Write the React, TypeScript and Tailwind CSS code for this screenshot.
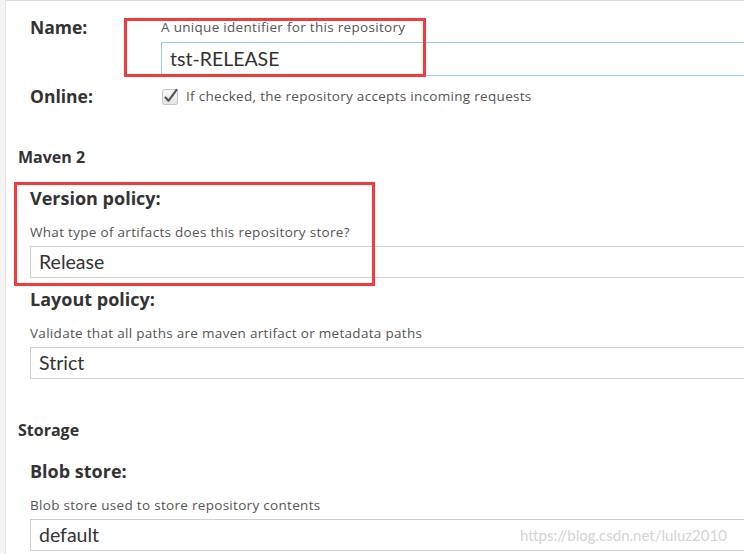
const sans = { fontFamily: "'Open Sans', 'Liberation Sans', sans-serif" };
const valueFont = { fontFamily: "Lato, 'Liberation Sans', sans-serif" };

const desc = "text-[13.5px] leading-[18px] tracking-[0.3px] text-[#555]";
const title = "text-[18px] font-bold leading-[22px] text-[#333]";
const section = "pl-[12px] text-[16px] font-bold leading-[18px] text-[#333]";

function FieldBox({ value, focused }: { value: string; focused?: boolean }) {
  return (
    <div
      className={
        "flex w-[calc(100%+12px)] items-center border pl-[8px] text-[19.5px] text-[#333] " +
        (focused ? "h-[34px] border-[#98cbee]" : "h-[32px] border-[#cfcfcf]")
      }
      style={valueFont}
    >
      {value}
    </div>
  );
}

function CheckBox() {
  return (
    <svg width="17" height="17" viewBox="0 0 17 17" className="shrink-0">
      <defs>
        <linearGradient id="cb" x1="0" y1="0" x2="0" y2="1">
          <stop offset="0" stopColor="#fbfbfb" />
          <stop offset="1" stopColor="#e2e2e2" />
        </linearGradient>
      </defs>
      <rect x="0.5" y="1.5" width="15" height="15" rx="2" fill="url(#cb)" stroke="#c4c4c4" />
      <path d="M3.5 9.5 L6.5 12.8 L14.5 1.8" fill="none" stroke="#555" strokeWidth="2.2" strokeLinecap="round" strokeLinejoin="round" />
    </svg>
  );
}

export default function App() {
  return (
    <div className="flex h-[554px] w-[744px] overflow-hidden bg-white" style={sans}>
      <div className="w-[6px] shrink-0 border-r border-[#e2e2e2] bg-[#f5f5f5]" />
      <div className="relative flex-1 border-t border-[#dcdcdc]">
        {/* Name */}
        <div className="flex pl-[24px] pt-[16px]">
          <div className="w-[131px] text-[17.5px] font-bold leading-[20px] text-[#333]">Name:</div>
          <div className="flex-1">
            <div className={desc + " leading-[20px]"}>A unique identifier for this repository</div>
            <div className="mt-[5px]">
              <FieldBox value="tst-RELEASE" focused />
            </div>
          </div>
        </div>

        {/* Online */}
        <div className="mt-[10px] flex items-center pl-[24px]">
          <div className="w-[132px] text-[17.5px] font-bold leading-[20px] text-[#333]">Online:</div>
          <CheckBox />
          <div className={"ml-[7px] " + desc}>If checked, the repository accepts incoming requests</div>
        </div>

        {/* Maven 2 */}
        <div className={"mt-[42px] " + section}>Maven 2</div>

        <div className="pl-[24px]">
          <div className={"mt-[21px] " + title}>Version policy:</div>
          <div className={"mt-[14px] " + desc}>What type of artifacts does this repository store?</div>
          <div className="mt-[5px]">
            <FieldBox value="Release" />
          </div>

          <div className={"mt-[10px] " + title}>Layout policy:</div>
          <div className={"mt-[14px] " + desc}>
            Validate that all paths are maven artifact or metadata paths
          </div>
          <div className="mt-[5px]">
            <FieldBox value="Strict" />
          </div>
        </div>

        {/* Storage */}
        <div className={"mt-[42px] " + section}>Storage</div>

        <div className="pl-[24px]">
          <div className={"mt-[21px] " + title}>Blob store:</div>
          <div className={"mt-[14px] " + desc}>Blob store used to store repository contents</div>
          <div className="relative mt-[5px]">
            <FieldBox value="default" />
            <span
              className="absolute left-[490px] top-[5px] text-[15px] text-[#d4d4d4]"
              style={valueFont}
            >
              https://blog.csdn.net/luluz2010
            </span>
          </div>
        </div>

        {/* annotation boxes */}
        <div className="absolute left-[118px] top-[17px] h-[59px] w-[302px] border-[3px] border-[#f43a3a]" />
        <div className="absolute left-[8px] top-[181px] h-[104px] w-[361px] border-[3px] border-[#f43a3a]" />
      </div>
    </div>
  );
}
